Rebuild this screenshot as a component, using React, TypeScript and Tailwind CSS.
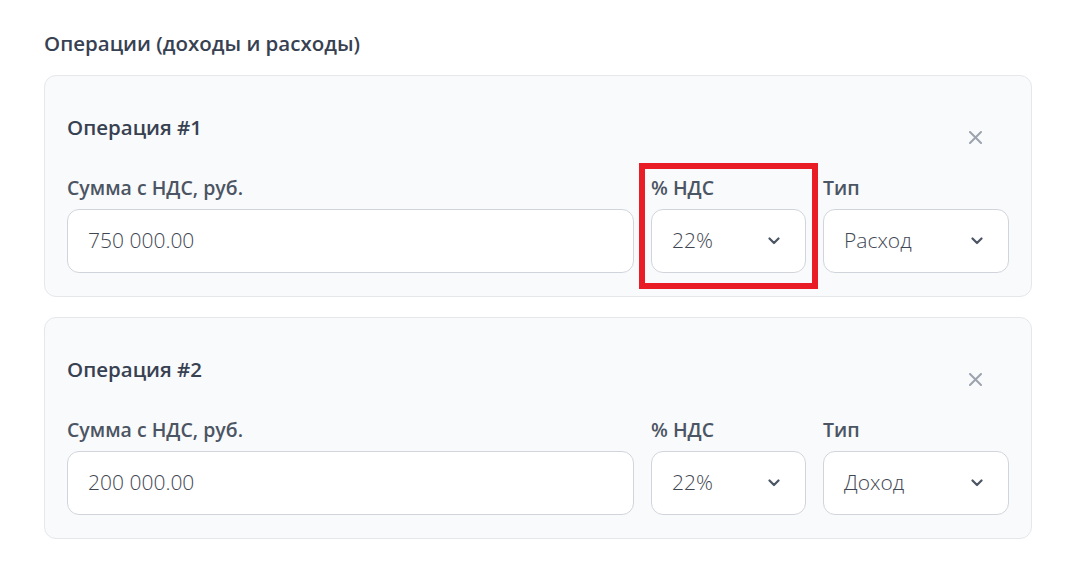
import React from "react";

type Op = { id: number; amount: string; vat: string; kind: string };

const ops: Op[] = [
  { id: 1, amount: "750 000.00", vat: "22%", kind: "Расход" },
  { id: 2, amount: "200 000.00", vat: "22%", kind: "Доход" },
];

function Chevron() {
  return (
    <svg width="12" height="8" viewBox="0 0 12 8" fill="none" className="shrink-0">
      <path d="M1.5 1.5L6 6L10.5 1.5" stroke="#4b5563" strokeWidth="2.2" strokeLinecap="round" strokeLinejoin="round" />
    </svg>
  );
}

function CloseIcon() {
  return (
    <svg width="13" height="13" viewBox="0 0 13 13" fill="none">
      <path d="M1 1L12 12M12 1L1 12" stroke="#9ca3af" strokeWidth="2" strokeLinecap="round" />
    </svg>
  );
}

function SelectBox({ value }: { value: string }) {
  return (
    <div className="h-[64px] rounded-xl border border-[#d1d5db] bg-white pl-[20px] pr-[25px] flex items-center justify-between">
      <span className="text-[21px] font-light text-[#3f4753]">{value}</span>
      <Chevron />
    </div>
  );
}

function FieldLabel({ children }: { children: React.ReactNode }) {
  return (
    <label className="text-[19.5px] font-semibold text-[#4b5563] leading-[28px] mb-[7px]">{children}</label>
  );
}

function OperationCard({ op, highlight }: { op: Op; highlight?: boolean }) {
  return (
    <div className="rounded-xl border border-[#e5e7eb] bg-[#f9fafb] px-[22px] pt-[34px] pb-[23px]">
      <div className="flex items-start justify-between">
        <h3 className="mt-[3px] text-[20.5px] font-semibold text-[#374151] leading-[28px]">Операция #{op.id}</h3>
        <button className="w-[30px] h-[30px] mr-[19px] mt-[12px] flex items-center justify-center">
          <CloseIcon />
        </button>
      </div>
      <div className="mt-[22px] grid grid-cols-[1fr_155px_186px] gap-x-[17px]">
        <div className="flex flex-col">
          <FieldLabel>Сумма с НДС, руб.</FieldLabel>
          <div className="h-[64px] rounded-xl border border-[#d1d5db] bg-white pl-[20px] flex items-center">
            <span className="text-[21px] font-light text-[#3f4753]">{op.amount}</span>
          </div>
        </div>
        <div className="relative flex flex-col">
          <FieldLabel>% НДС</FieldLabel>
          <SelectBox value={op.vat} />
          {highlight && (
            <div className="pointer-events-none absolute left-[-12px] right-[-12px] top-[-11px] bottom-[-16px] border-[6px] border-[#e81d25]" />
          )}
        </div>
        <div className="flex flex-col">
          <FieldLabel>Тип</FieldLabel>
          <SelectBox value={op.kind} />
        </div>
      </div>
    </div>
  );
}

export default function App() {
  return (
    <div
      className="min-h-screen bg-white pl-[44px] pt-[28px]"
      style={{ fontFamily: '"Open Sans", "Noto Sans", sans-serif' }}
    >
      <h2 className="text-[20.5px] font-semibold text-[#374151] leading-[30px]">Операции (доходы и расходы)</h2>
      <div className="mt-[17px] w-[988px] flex flex-col gap-[20px]">
        {ops.map((op) => (
          <OperationCard key={op.id} op={op} highlight={op.id === 1} />
        ))}
      </div>
    </div>
  );
}
